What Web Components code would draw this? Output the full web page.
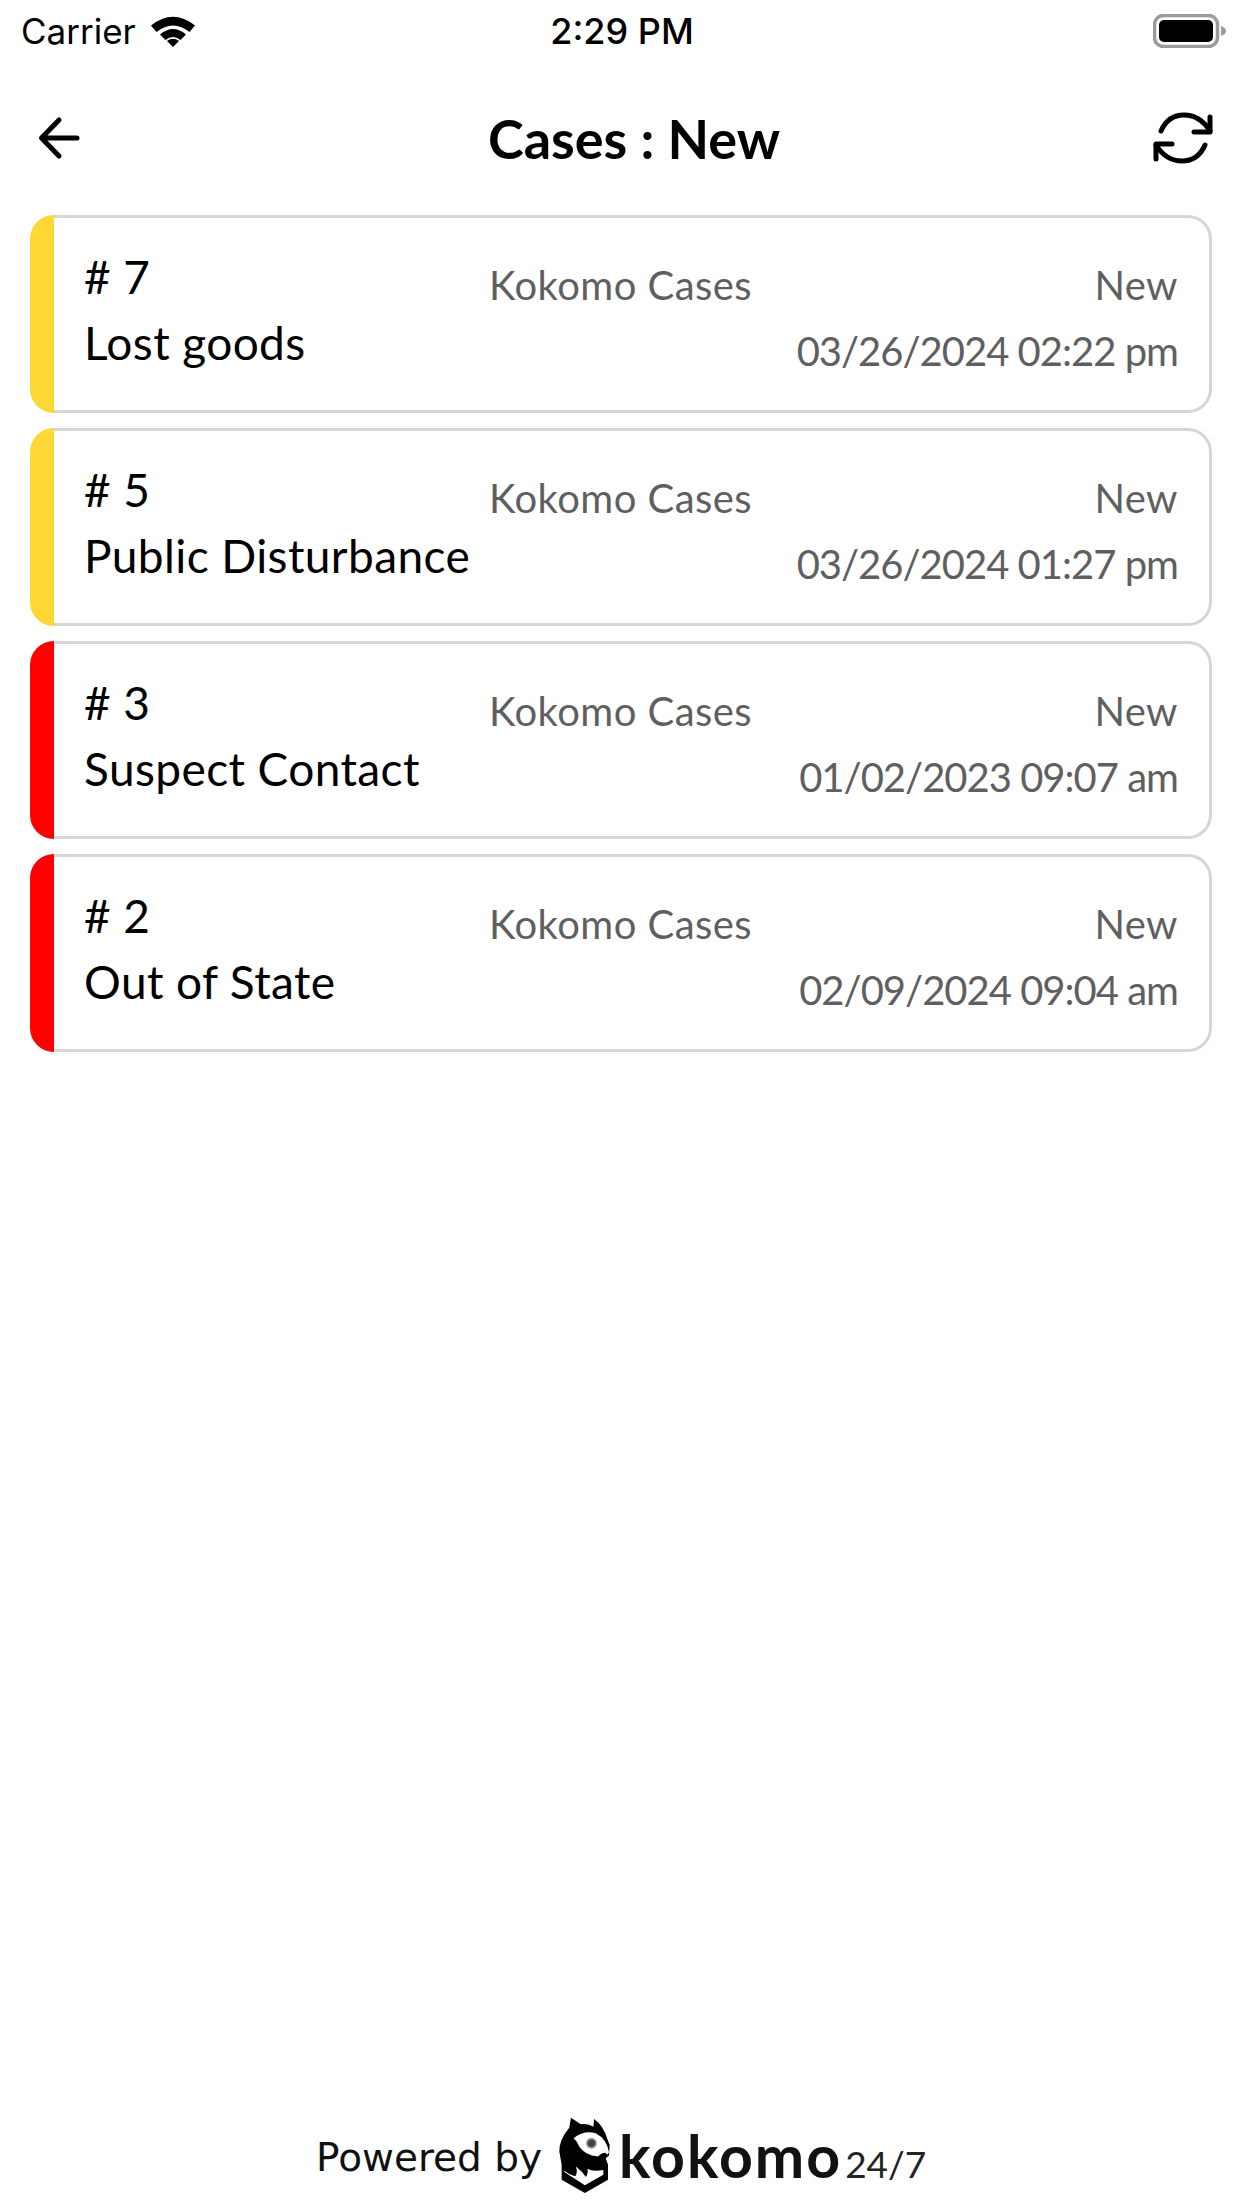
<!DOCTYPE html>
<html>
<head>
<meta charset="utf-8">
<title>Cases : New</title>
<style>
  html, body { margin: 0; padding: 0; background: #fff; }
  body {
    width: 1242px;
    height: 2208px;
    display: flex;
    flex-direction: column;
    font-family: Lato, sans-serif;
  }
  case-list { flex: 1; }
</style>
</head>
<body>
<status-bar carrier="Carrier" time="2:29 PM"></status-bar>
<app-header title="Cases : New"></app-header>
<case-list>
  <case-card number="# 7" name="Lost goods" group="Kokomo Cases" status="New" date="03/26/2024 02:22 pm" color="#fdd835"></case-card>
  <case-card number="# 5" name="Public Disturbance" group="Kokomo Cases" status="New" date="03/26/2024 01:27 pm" color="#fdd835"></case-card>
  <case-card number="# 3" name="Suspect Contact" group="Kokomo Cases" status="New" date="01/02/2023 09:07 am" color="#ff0000"></case-card>
  <case-card number="# 2" name="Out of State" group="Kokomo Cases" status="New" date="02/09/2024 09:04 am" color="#ff0000"></case-card>
</case-list>
<powered-by></powered-by>

<script>
class StatusBar extends HTMLElement {
  constructor() {
    super();
    this.attachShadow({ mode: "open" });
  }

  connectedCallback() {
    this.shadowRoot.innerHTML = `
      <style>
        :host {
          display: grid;
          grid-template-columns: 1fr auto 1fr;
          align-items: center;
          height: 60px;
          padding: 2px 16px 0 21px;
          font-family: Inter, sans-serif;
          color: #000;
          box-sizing: border-box;
        }
        .left { display: flex; align-items: center; gap: 15px; font-size: 35px; }
        .time { font-size: 36px; font-weight: 500; margin-right: 3px; }
        .right { display: flex; justify-content: flex-end; }
        svg { display: block; }
      </style>
      <div class="left">
        <span>${this.getAttribute("carrier")}</span>
        <svg width="44" height="32" viewBox="0 0 44 32">
          <path d="M0 10.5 Q22 -7 44 10.5 L38.5 17 Q22 4 5.5 17 Z"/>
          <path d="M9 20.5 Q22 9.5 35 20.5 L29.5 26 Q22 20 14.5 26 Z" transform="translate(0 -1)"/>
          <path d="M16 26 Q22 21.5 28 26 L22 32 Z"/>
        </svg>
      </div>
      <div class="time">${this.getAttribute("time")}</div>
      <div class="right">
        <svg width="73" height="34" viewBox="0 0 73 34">
          <rect x="1.5" y="1.5" width="63" height="31" rx="9" fill="none" stroke="#9b9b9b" stroke-width="3.5"/>
          <rect x="6" y="6" width="54" height="22" rx="5" fill="#000"/>
          <path d="M68 12 Q73 14 73 17 Q73 20 68 22 Z" fill="#9b9b9b"/>
        </svg>
      </div>
    `;
  }
}
customElements.define("status-bar", StatusBar);

class AppHeader extends HTMLElement {
  constructor() {
    super();
    this.attachShadow({ mode: "open" });
  }

  connectedCallback() {
    this.shadowRoot.innerHTML = `
      <style>
        :host {
          display: flex;
          align-items: center;
          height: 155px;
          padding: 0 28px 0 38px;
          box-sizing: border-box;
          color: #000;
        }
        .title {
          flex: 1;
          text-align: center;
          padding: 2px 0 0 34px;
          font-family: Lato, sans-serif;
          font-weight: 700;
          font-size: 54px;
        }
        svg { display: block; fill: none; stroke: #000; stroke-linecap: round; stroke-linejoin: round; }
      </style>
      <svg width="44" height="44" viewBox="0 0 44 44" stroke-width="5">
        <path d="M39 22 H4 M21 4 L3.500 22 L21 40"/>
      </svg>
      <div class="title">${this.getAttribute("title")}</div>
      <svg width="62" height="52" viewBox="0 0 62 52" stroke-width="5">
        <path d="M9 19 Q16 3 32 3 Q48 3 58 19"/>
        <path d="M58 5 V20 H42"/>
        <path d="M53 33 Q46 49 30 49 Q14 49 4 33"/>
        <path d="M4 47 V32 H20"/>
      </svg>
    `;
  }
}
customElements.define("app-header", AppHeader);

class CaseList extends HTMLElement {
  constructor() {
    super();
    this.attachShadow({ mode: "open" });
  }

  connectedCallback() {
    this.shadowRoot.innerHTML = `
      <style>
        :host {
          display: flex;
          flex-direction: column;
          gap: 15px;
          padding: 0 30px 0 30px;
        }
      </style>
      <slot></slot>
    `;
  }
}
customElements.define("case-list", CaseList);

class CaseCard extends HTMLElement {
  constructor() {
    super();
    this.attachShadow({ mode: "open" });
  }

  connectedCallback() {
    const get = (name) => this.getAttribute(name);
    this.shadowRoot.innerHTML = `
      <style>
        :host {
          display: flex;
          height: 198px;
          font-family: Lato, sans-serif;
        }
        .bar {
          width: 24px;
          flex: none;
          border-radius: 24px 0 0 24px;
          background: ${get("color")};
        }
        .body {
          flex: 1;
          box-sizing: border-box;
          border: 3px solid #d6d6d6;
          border-left: 0;
          border-radius: 0 24px 24px 0;
          padding: 25px 31px 0 30px;
          display: grid;
          grid-template-columns: 405px 1fr auto;
          grid-template-rows: 66px 66px;
          align-items: center;
        }
        .main { color: #000; font-size: 46px; letter-spacing: 0.4px; }
        .sub { color: #5f5f5f; font-size: 40px; letter-spacing: 0.45px; padding-top: 18px; }
        .date { letter-spacing: -1px; }
        .right { text-align: right; }
      </style>
      <div class="bar"></div>
      <div class="body">
        <div class="main">${get("number")}</div>
        <div class="sub">${get("group")}</div>
        <div class="sub right">${get("status")}</div>
        <div class="main">${get("name")}</div>
        <div></div>
        <div class="sub right date">${get("date")}</div>
      </div>
    `;
  }
}
customElements.define("case-card", CaseCard);

class PoweredBy extends HTMLElement {
  constructor() {
    super();
    this.attachShadow({ mode: "open" });
  }

  connectedCallback() {
    this.shadowRoot.innerHTML = `
      <style>
        :host {
          display: flex;
          align-items: center;
          height: 106px;
          padding-left: 316px;
          box-sizing: border-box;
          color: #111;
          font-family: "DejaVu Sans", sans-serif;
        }
        .label { font-size: 39px; margin: 5px 17px 0 0; }
        .brand { display: flex; align-items: baseline; font-family: Lato, sans-serif; }
        .name { font-weight: 700; font-size: 59px; margin-left: 9px; letter-spacing: 2px; }
        .suffix { font-size: 37px; margin-left: 3px; color: #222; }
        svg { display: block; flex: none; }
      </style>
      <span class="label">Powered by</span>
      <svg width="51" height="77" viewBox="14 16 154 232">
        <path d="M50 18 L80 38 Q100 34 118 45 L120 22 Q148 42 160 82 L167 100 L165 132 L155 140 L162 160 L162 205 L92 245 L22 205 L22 160 L15 120 Q14 85 45 48 Z"/>
        <path fill="#fff" d="M58 80 Q90 55 125 65 Q158 82 165 122 L160 130 Q152 116 132 135 Q92 132 75 105 Q70 90 58 80 Z"/>
        <circle cx="112" cy="95" r="14" fill="#444" stroke="#999" stroke-width="5"/>
        <path fill="#fff" d="M30 182 L92 222 L148 190 L148 176 Q115 182 100 172 Q103 185 95 197 Q85 180 65 165 Q72 185 62 195 Q45 190 30 178 Z"/>
      </svg>
      <span class="brand">
        <span class="name">kokomo</span>
        <span class="suffix">24/7</span>
      </span>
    `;
  }
}
customElements.define("powered-by", PoweredBy);
</script>
</body>
</html>
